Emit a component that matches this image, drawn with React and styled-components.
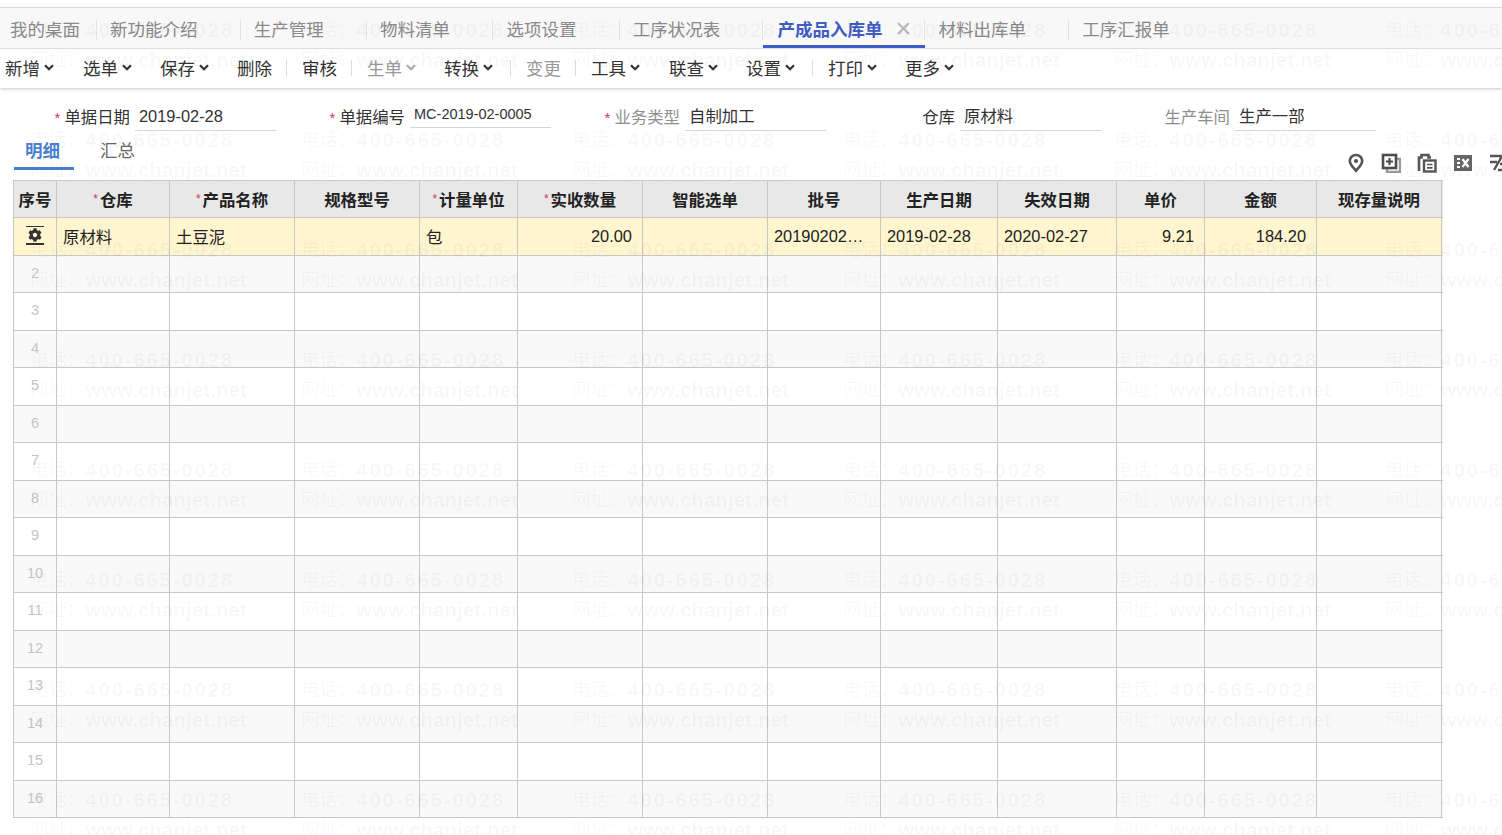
import React from 'react'
import styled, { createGlobalStyle } from 'styled-components'
import { FaCog } from 'react-icons/fa'

const FONT = '"Liberation Sans", "Noto Sans CJK SC", sans-serif'

const tabs = [
  { name: '我的桌面', first: true },
  { name: '新功能介绍' },
  { name: '生产管理' },
  { name: '物料清单' },
  { name: '选项设置' },
  { name: '工序状况表' },
  { name: '产成品入库单', active: true },
  { name: '材料出库单' },
  { name: '工序汇报单' }
]

const tools = [
  { label: '新增', drop: true, gap: 29 },
  { label: '选单', drop: true, gap: 28 },
  { label: '保存', drop: true, gap: 28 },
  { label: '删除', gap: 14, sep: true },
  { label: '审核', gap: 14, sep: true },
  { label: '生单', drop: true, gap: 28, off: true },
  { label: '转换', drop: true, gap: 17, sep: true },
  { label: '变更', gap: 14, sep: true, off: true },
  { label: '工具', drop: true, gap: 29 },
  { label: '联查', drop: true, gap: 28 },
  { label: '设置', drop: true, gap: 17, sep: true },
  { label: '打印', drop: true, gap: 28 },
  { label: '更多', drop: true, gap: 28 }
]

const fields = [
  { label: '单据日期', value: '2019-02-28', required: true },
  { label: '单据编号', value: 'MC-2019-02-0005', required: true, raised: true },
  { label: '业务类型', value: '自制加工', required: true, muted: true },
  { label: '仓库', value: '原材料' },
  { label: '生产车间', value: '生产一部', muted: true }
]

const columns = [
  { title: '序号', width: 43 },
  { title: '仓库', width: 113, required: true },
  { title: '产品名称', width: 125, required: true },
  { title: '规格型号', width: 125 },
  { title: '计量单位', width: 98, required: true },
  { title: '实收数量', width: 125, required: true },
  { title: '智能选单', width: 125 },
  { title: '批号', width: 113 },
  { title: '生产日期', width: 117 },
  { title: '失效日期', width: 119 },
  { title: '单价', width: 88 },
  { title: '金额', width: 112 },
  { title: '现存量说明', width: 125 }
]

const firstRow = [
  { text: '原材料' },
  { text: '土豆泥' },
  { text: '' },
  { text: '包' },
  { text: '20.00', right: true },
  { text: '' },
  { text: '20190202…' },
  { text: '2019-02-28' },
  { text: '2020-02-27' },
  { text: '9.21', right: true },
  { text: '184.20', right: true },
  { text: '' }
]

const gridCols = columns.map((c) => `${c.width}px`).join(' ')
const rowNumbers = Array.from({ length: 15 }, (_, i) => i + 2)
const watermarks = Array.from({ length: 48 }, (_, i) => i)

const Chevron = ({ off }) => (
  <ChevronSvg viewBox="0 0 10 7">
    <polyline points="1,1.2 5,5.2 9,1.2" fill="none" stroke={off ? '#aaa' : '#333'} strokeWidth="2.2" />
  </ChevronSvg>
)

const App = () => {
  return (
    <Page>
      <GlobalStyle />
      <TabBar>
        {tabs.map((t) => (
          <Tab key={t.name} $first={t.first} $active={t.active}>
            {t.name}
            {t.active && (
              <TabClose viewBox="0 0 13 13">
                <path d="M1 1l11 11M12 1L1 12" stroke="#b8b8b8" strokeWidth="2" />
              </TabClose>
            )}
          </Tab>
        ))}
      </TabBar>
      <Toolbar>
        {tools.map((t) => (
          <React.Fragment key={t.label}>
            <ToolBtn $off={t.off} $gap={t.gap}>
              {t.label}
              {t.drop && <Chevron off={t.off} />}
            </ToolBtn>
            {t.sep && <ToolSep />}
          </React.Fragment>
        ))}
      </Toolbar>
      <FormRow>
        {fields.map((f) => (
          <Field key={f.label}>
            <FieldLabel $muted={f.muted}>
              {f.required && <Star>*</Star>}
              {f.label}
            </FieldLabel>
            <FieldValue $raised={f.raised}>{f.value}</FieldValue>
          </Field>
        ))}
      </FormRow>
      <SubBar>
        <SubTabs>
          <SubTab $active>明细</SubTab>
          <SubTab>汇总</SubTab>
        </SubTabs>
        <IconRow>
          <svg width="18" height="20" viewBox="0 0 18 20">
            <path d="M9 2c-3.6 0-6.2 2.6-6.2 6 0 3.6 3.8 6.800 6.200 9.800 2.400-3 6.200-6.200 6.200-9.800 0-3.400-2.600-6-6.200-6z" fill="none" stroke="#555" strokeWidth="2.6" />
            <circle cx="9" cy="8" r="2.100" fill="#555" />
          </svg>
          <svg width="20" height="20" viewBox="0 0 20 20">
            <path d="M15.500 6H19v13H6v-3.500" fill="none" stroke="#999" strokeWidth="2.400" />
            <rect x="2" y="2" width="13" height="13" fill="none" stroke="#4d4d4d" strokeWidth="2.600" />
            <path d="M8.500 5v7M5 8.500h7" stroke="#4d4d4d" strokeWidth="2.200" />
          </svg>
          <svg width="20" height="20" viewBox="0 0 20 20">
            <path d="M2 18V4.500h2.500V2h7v2.500H14" fill="none" stroke="#555" strokeWidth="2.600" />
            <rect x="7" y="7.500" width="11.500" height="11" fill="#fff" stroke="#555" strokeWidth="2.400" />
            <path d="M10 11.500h5.500M10 14.800h5.500" stroke="#555" strokeWidth="1.700" />
          </svg>
          <svg width="20" height="20" viewBox="0 0 20 20">
            <path d="M1 2h18v16H1z" fill="#666" />
            <path d="M4 5h3v2H4zM4 9h3v2H4zM4 13h3v2H4z" fill="#fff" />
            <path d="M9.500 6l6 8M15.500 6l-6 8" stroke="#fff" strokeWidth="2.200" />
          </svg>
          <svg width="20" height="20" viewBox="0 0 20 20">
            <path d="M1 3h17M13 3L5 17M1 9h7M11 11h8M9 17h10" fill="none" stroke="#555" strokeWidth="2.400" />
          </svg>
        </IconRow>
      </SubBar>
      <Grid>
        <HeadRow>
          {columns.map((c) => (
            <HeadCell key={c.title}>
              {c.required && <HeadStar>*</HeadStar>}
              {c.title}
            </HeadCell>
          ))}
        </HeadRow>
        <Row $current>
          <NumCell>
            <CurrentMark>
              <FaCog size={14} color="#333" />
            </CurrentMark>
          </NumCell>
          {firstRow.map((cell, i) => (
            <Cell key={i} $right={cell.right}>{cell.text}</Cell>
          ))}
        </Row>
        {rowNumbers.map((n) => (
          <Row key={n} $striped={n % 2 === 0}>
            <NumCell>{n}</NumCell>
            {firstRow.map((_, i) => (
              <Cell key={i} />
            ))}
          </Row>
        ))}
      </Grid>
      <Watermark>
        {watermarks.map((i) => (
          <WatermarkCell key={i}>
            <WatermarkLine>
              <WatermarkLabel>电话：</WatermarkLabel>
              <WatermarkPhone>400-665-0028</WatermarkPhone>
            </WatermarkLine>
            <WatermarkLine>
              <WatermarkLabel>网址：</WatermarkLabel>
              www.chanjet.net
            </WatermarkLine>
          </WatermarkCell>
        ))}
      </Watermark>
    </Page>
  )
}

export default App

const GlobalStyle = createGlobalStyle`
  html, body {
    margin: 0;
    padding: 0;
    background: #fff;
    overflow: hidden;
  }
`

const Page = styled.div`
  position: relative;
  width: 1502px;
  height: 835px;
  overflow: hidden;
  padding-top: 7px;
  box-sizing: border-box;
  font-family: ${FONT};
  font-size: 16.4px;
  color: #333;
`

const TabBar = styled.div`
  display: flex;
  height: 42px;
  box-sizing: border-box;
  background: #f8f8f8;
  border-top: 1px solid #dcdcdc;
  border-bottom: 1px solid #e6e6e6;
`

const Tab = styled.div`
  position: relative;
  display: flex;
  align-items: center;
  height: 40px;
  box-sizing: border-box;
  padding: 3px ${(p) => (p.$first ? '17px' : p.$active ? '15px' : '43.3px')} 0 ${(p) => (p.$first ? '10px' : p.$active ? '14px' : '13px')};
  font-size: 17.5px;
  font-weight: ${(p) => (p.$active ? 700 : 400)};
  color: ${(p) => (p.$active ? '#3f5bc4' : '#8a8a8a')};
  border-bottom: 3px solid ${(p) => (p.$active ? '#3f5bc4' : 'transparent')};
  &:not(:last-child)::after {
    content: '';
    position: absolute;
    right: 0;
    top: 12px;
    height: 20px;
    width: 1px;
    background: #e2e2e2;
  }
`

const TabClose = styled.svg`
  width: 13px;
  height: 13px;
  margin-left: 15px;
`

const Toolbar = styled.div`
  display: flex;
  align-items: center;
  height: 39px;
  padding: 0 0 2px 5px;
  box-sizing: border-box;
  background: #fff;
  box-shadow: 0 1px 3px rgba(0, 0, 0, 0.22);
`

const ToolBtn = styled.div`
  display: flex;
  align-items: center;
  font-size: 17.5px;
  color: ${(p) => (p.$off ? '#999' : '#333')};
  margin-right: ${(p) => p.$gap}px;
`

const ChevronSvg = styled.svg`
  width: 10px;
  height: 7px;
  margin-left: 4px;
`

const ToolSep = styled.span`
  width: 1px;
  height: 16px;
  margin-right: 15px;
  background: #ddd;
`

const FormRow = styled.div`
  display: flex;
  box-sizing: border-box;
  height: 43px;
  padding: 16px 0 0 10px;
`

const Field = styled.div`
  display: flex;
  align-items: flex-start;
  width: 275px;
  flex: none;
`

const FieldLabel = styled.div`
  width: 125px;
  box-sizing: border-box;
  padding-right: 5px;
  text-align: right;
  line-height: 26px;
  color: ${(p) => (p.$muted ? '#8e8e8e' : '#333')};
`

const Star = styled.span`
  color: #d0365a;
  font-size: 15px;
  margin-right: 4px;
`

const FieldValue = styled.div`
  width: 141px;
  height: ${(p) => (p.$raised ? '24px' : '27px')};
  box-sizing: border-box;
  padding-left: 4px;
  line-height: ${(p) => (p.$raised ? '20px' : '24px')};
  font-size: ${(p) => (p.$raised ? '14.5px' : '16.4px')};
  border-bottom: 1px solid #d4d4d4;
`

const SubBar = styled.div`
  display: flex;
  justify-content: space-between;
  box-sizing: border-box;
  height: 49px;
  padding-left: 14px;
`

const SubTabs = styled.div`
  display: flex;
  height: 39px;
`

const SubTab = styled.div`
  display: flex;
  align-items: center;
  box-sizing: border-box;
  height: 39px;
  padding: 0 ${(p) => (p.$active ? '14px' : '0')} 0 ${(p) => (p.$active ? '11px' : '26px')};
  font-size: 17.5px;
  font-weight: ${(p) => (p.$active ? 700 : 400)};
  color: ${(p) => (p.$active ? '#4a7fd0' : '#666')};
  border-bottom: 3px solid ${(p) => (p.$active ? '#4a7fd0' : 'transparent')};
`

const IconRow = styled.div`
  display: flex;
  align-items: center;
  gap: 16px;
  height: 20px;
  margin: 22px -7px 0 0;
`

const Grid = styled.div`
  width: 1429px;
  margin-left: 13px;
  border-top: 1px solid #c8c8c8;
  border-left: 1px solid #c8c8c8;
`

const HeadRow = styled.div`
  display: grid;
  grid-template-columns: ${gridCols};
  height: 36px;
  background: #e8e8e8;
  border-bottom: 1px solid #c8c8c8;
`

const HeadCell = styled.div`
  display: flex;
  align-items: center;
  justify-content: center;
  border-right: 1px solid #c8c8c8;
  font-weight: 700;
  color: #222;
  white-space: nowrap;
`

const HeadStar = styled.span`
  color: #d0365a;
  font-size: 12px;
  font-weight: 400;
  margin-right: 2px;
`

const Row = styled.div`
  display: grid;
  grid-template-columns: ${gridCols};
  height: 37.5px;
  box-sizing: border-box;
  background: ${(p) => (p.$current ? '#fff5cf' : p.$striped ? '#f9f9f9' : '#fff')};
  border-bottom: 1px solid #c8c8c8;
`

const Cell = styled.div`
  display: flex;
  align-items: center;
  justify-content: ${(p) => (p.$right ? 'flex-end' : 'flex-start')};
  padding: 0 10px 0 6px;
  border-right: 1px solid #c8c8c8;
  color: #222;
  white-space: nowrap;
  overflow: hidden;
`

const NumCell = styled.div`
  display: flex;
  align-items: center;
  justify-content: center;
  padding-bottom: 2px;
  border-right: 1px solid #c8c8c8;
  font-size: 14.5px;
  color: #c4c4c4;
`

const CurrentMark = styled.div`
  display: flex;
  align-items: center;
  justify-content: center;
  width: 18px;
  height: 16px;
  border-top: 1px solid #333;
  border-bottom: 2px solid #333;
`

const Watermark = styled.div`
  position: absolute;
  top: 0;
  left: 30px;
  display: grid;
  grid-template-columns: repeat(6, 271px);
  grid-auto-rows: 110px;
  pointer-events: none;
`

const WatermarkCell = styled.div`
  display: flex;
  flex-direction: column;
  padding-top: 15px;
  font-size: 20px;
  line-height: 30px;
  letter-spacing: 0.3px;
  font-weight: 700;
  white-space: nowrap;
  color: rgba(0, 0, 0, 0.04);
`

const WatermarkLine = styled.div`
  display: flex;
  align-items: center;
`

const WatermarkLabel = styled.span`
  font-size: 18.5px;
  letter-spacing: 0;
  font-weight: 400;
`

const WatermarkPhone = styled.span`
  letter-spacing: 2px;
`
